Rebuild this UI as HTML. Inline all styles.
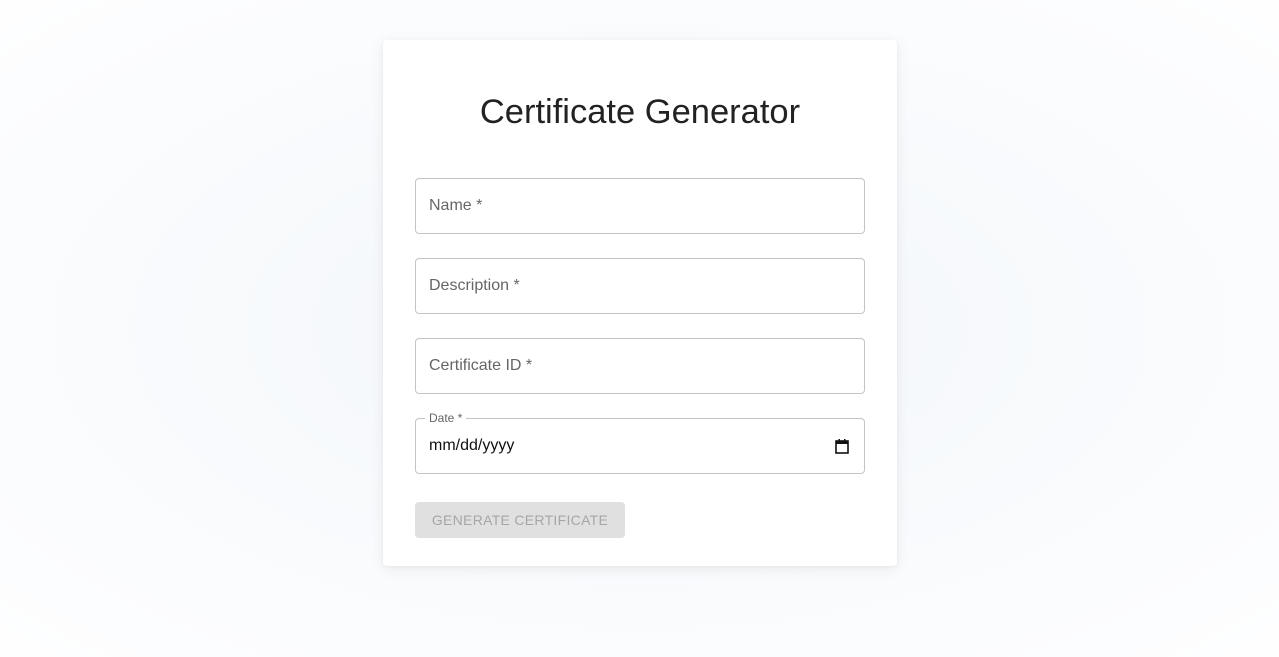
<!DOCTYPE html>
<html><head><style>
html,body{margin:0;height:100%}
body{width:1279px;height:657px;background:radial-gradient(ellipse at center,#f3f6fb 0%,#f9fbfd 60%,#fefeff 100%);font-family:"Liberation Sans",Arial,sans-serif;position:relative;overflow:hidden}
.card{position:absolute;left:383px;top:40px;width:514px;height:526px;background:#fff;border-radius:4px;box-shadow:0 3px 14px rgba(0,0,0,0.07),0 1px 3px rgba(0,0,0,0.04)}
h1{position:absolute;left:0;right:0;top:52px;margin:0;text-align:center;font-weight:400;font-size:34.5px;color:#222;line-height:40px}
.f{position:absolute;left:415px;width:448px;height:54px;border:1px solid #c4c4c4;border-radius:4px}
.f span{position:absolute;left:13px;top:18px;font-size:16px;color:#666}
.lbl{position:absolute;left:9px;top:-8px;background:#fff;padding:0 4px;font-size:12px;color:#666}
.btn{position:absolute;left:415px;top:502px;width:210px;height:36px;background:#e0e0e0;border-radius:4px;color:#a6a6a6;font-size:14px;letter-spacing:.3px;text-align:center;line-height:36px}
</style></head><body>
<div class="card"><h1>Certificate Generator</h1></div>
<div class="f" style="top:178px"><span>Name *</span></div>
<div class="f" style="top:258px"><span>Description *</span></div>
<div class="f" style="top:338px"><span>Certificate ID *</span></div>
<div class="f" style="top:418px"><div class="lbl">Date *</div><span style="color:#111">mm/dd/yyyy</span>
<svg style="position:absolute;left:419px;top:20px" width="14" height="15" viewBox="0 0 14 15"><rect x="1" y="2" width="12" height="12" fill="none" stroke="#111" stroke-width="1.6"/><rect x="1" y="2" width="12" height="3" fill="#111"/><rect x="3.5" y="0" width="1.5" height="3" fill="#111"/><rect x="9" y="0" width="1.5" height="3" fill="#111"/></svg></div>
<div class="btn">GENERATE CERTIFICATE</div>
</body></html>
